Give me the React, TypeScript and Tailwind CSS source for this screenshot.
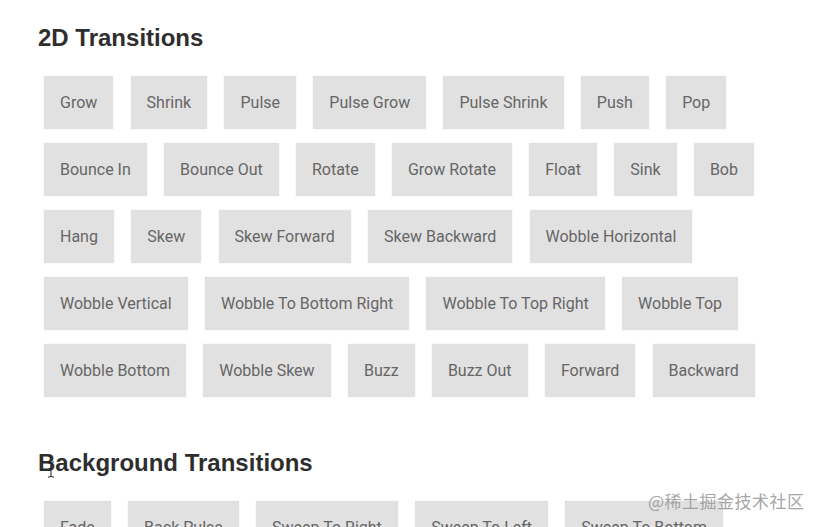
import React from 'react';

const twoD = [
  'Grow', 'Shrink', 'Pulse', 'Pulse Grow', 'Pulse Shrink', 'Push', 'Pop',
  'Bounce In', 'Bounce Out', 'Rotate', 'Grow Rotate', 'Float', 'Sink', 'Bob',
  'Hang', 'Skew', 'Skew Forward', 'Skew Backward', 'Wobble Horizontal',
  'Wobble Vertical', 'Wobble To Bottom Right', 'Wobble To Top Right', 'Wobble Top',
  'Wobble Bottom', 'Wobble Skew', 'Buzz', 'Buzz Out', 'Forward', 'Backward',
];

const background = ['Fade', 'Back Pulse', 'Sweep To Right', 'Sweep To Left', 'Sweep To Bottom'];

const Section: React.FC<{ title: string; items: string[] }> = ({ title, items }) => (
  <section>
    <h2 className="text-[24px] leading-[31px] font-bold text-[#2e2e2e] font-['Liberation_Sans',Arial,sans-serif]">
      {title}
    </h2>
    <div className="mt-[23px] ml-[6px] w-[780px] flex flex-wrap gap-x-[17.3px] gap-y-[14px]">
      {items.map((item) => (
        <button
          key={item}
          className="h-[53px] px-4 bg-[#e1e1e1] text-[#666] text-[16px] font-['Roboto',sans-serif] shadow-[0_0_1px_rgba(0,0,0,0.15)]"
        >
          {item}
        </button>
      ))}
    </div>
  </section>
);

export default function App() {
  return (
    <div className="relative w-[820px] h-[527px] overflow-hidden bg-white">
      <div className="pt-[22px] pl-[38px] flex flex-col gap-[50px]">
        <Section title="2D Transitions" items={twoD} />
        <Section title="Background Transitions" items={background} />
      </div>
      <svg className="absolute left-[47px] top-[461px]" width="8" height="17" viewBox="0 0 8 17">
        <path d="M1 1h2l1 1 1-1h2M4 2v13M1 16h2l1-1 1 1h2" fill="none" stroke="#222" strokeWidth="1" />
      </svg>
      <div className="absolute left-[648px] top-[488px] text-[17px] text-[#9a9a9a]/90 font-['Noto_Sans_CJK_SC',sans-serif] tracking-[0.5px]">
        @稀土掘金技术社区
      </div>
    </div>
  );
}
